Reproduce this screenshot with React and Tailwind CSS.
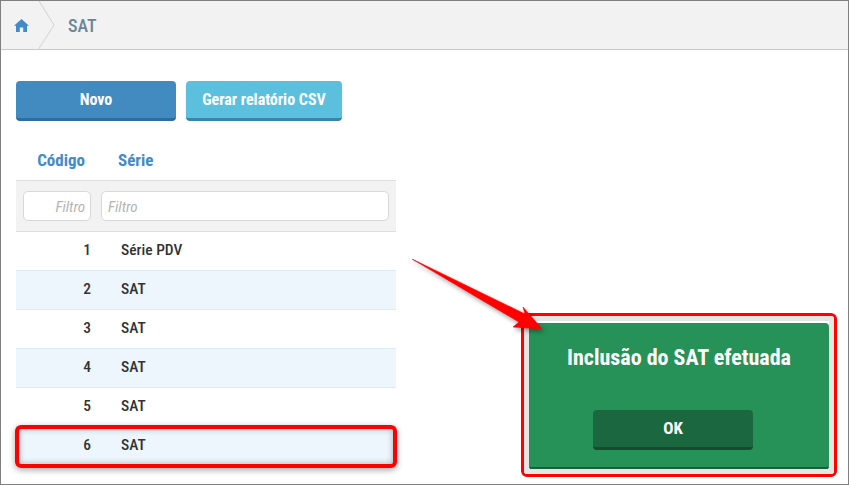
const ROWS = [
  { code: 1, serie: 'Série PDV' },
  { code: 2, serie: 'SAT' },
  { code: 3, serie: 'SAT' },
  { code: 4, serie: 'SAT' },
  { code: 5, serie: 'SAT' },
  { code: 6, serie: 'SAT' },
];

const font = "font-['Roboto_Condensed','Liberation_Sans',sans-serif]";

function HomeIcon() {
  return (
    <svg width="15" height="13" viewBox="0 0 15 13" className="fill-[#428bca]">
      <path d="M7.5 0 L15 6.8 H13 V13 H9.2 V8.4 H5.8 V13 H2 V6.8 H0 Z" />
    </svg>
  );
}

function Breadcrumb() {
  return (
    <div className="relative flex h-[49px] shrink-0 items-center border-b border-[#c8c8c8] bg-[#f2f2f2]">
      <div className="flex w-[67px] shrink-0 pl-[13px]">
        <HomeIcon />
      </div>
      <span className="text-[18px] font-medium text-[#6b8596]">SAT</span>
      <svg width="20" height="49" className="absolute top-0 left-[37px]" fill="none">
        <path d="M1 0 L16 24 L0 49" stroke="#d2d2d2" strokeWidth="1" />
      </svg>
    </div>
  );
}

function Table() {
  return (
    <div className="mt-[20px] w-[380px] text-[15.5px]">
      <div className="flex h-[39px] items-center font-bold text-[#428bca]">
        <div className="w-[69px] text-right text-[17px]">Código</div>
        <div className="ml-[33px] text-[17px]">Série</div>
      </div>
      <div className="flex h-[52px] items-center gap-[10px] border-y border-[#dedede] bg-[#f2f2f2] px-[7px]">
        <div className="flex h-[30px] w-[68px] items-center justify-end rounded-[5px] border border-[#d8d8d8] bg-white pt-[2px] pr-[5px] text-[15px] text-[#b4b4b4] italic">
          Filtro
        </div>
        <div className="flex h-[30px] flex-1 items-center rounded-[5px] border border-[#d8d8d8] bg-white pt-[2px] pl-[6px] text-[15px] text-[#b4b4b4] italic">
          Filtro
        </div>
      </div>
      {ROWS.map((row, i) => (
        <div
          key={row.code}
          className={`flex h-[39px] items-center border-b border-[#dcecf7] font-medium text-[#333333] ${
            i % 2 === 1 ? 'bg-[#edf6fd]' : 'bg-white'
          }`}
        >
          <div className="w-[75px] text-right">{row.code}</div>
          <div className="ml-[30px]">{row.serie}</div>
        </div>
      ))}
    </div>
  );
}

function Dialog() {
  return (
    <div className="absolute top-[322px] left-[528px] h-[147px] w-[300px] rounded-[4px] border-b-[3px] border-[#1e5c3b] bg-[#269257] text-white">
      <div className="mt-[18px] text-center text-[22px] font-bold">Inclusão do SAT efetuada</div>
      <button className="mt-[36px] ml-[64px] flex h-[40px] w-[160px] items-center justify-center rounded-[4px] border-b-[3px] border-[#174a2e] bg-[#1b6840] text-[17px] font-bold">
        OK
      </button>
    </div>
  );
}

export default function App() {
  return (
    <div className={`relative h-[485px] w-[849px] overflow-hidden border border-[#808080] bg-white ${font}`}>
      <Breadcrumb />
      <div className="px-[15px] pt-[31px]">
        <div className="flex gap-[10px] text-[16px] font-bold text-white">
          <button className="h-[40px] w-[160px] rounded-[4px] border-b-[3px] border-[#2f6d9e] bg-[#428bc0]">Novo</button>
          <button className="h-[40px] w-[156px] rounded-[4px] border-b-[3px] border-[#3a86a8] bg-[#5bc0de]">
            Gerar relatório CSV
          </button>
        </div>
        <Table />
      </div>

      <Dialog />

      {/* anotacoes vermelhas por cima do print */}
      <div className="absolute top-[424px] left-[14px] h-[43px] w-[382px] rounded-[6px] border-[4px] border-[#ff0000] shadow-[0_2px_6px_rgba(0,0,0,0.35),inset_0_0_6px_rgba(0,0,0,0.3)]" />
      <div className="absolute top-[312px] left-[520px] h-[164px] w-[316px] rounded-[6px] border-[3px] border-[#ff0000]" />
      <div className="absolute top-[315px] left-[523px] h-[158px] w-[310px] rounded-[3px] border-[5px] border-[#e6e6e6]" />
      <svg width="140" height="80" className="absolute top-[258px] left-[411px] drop-shadow-[2px_3px_2px_rgba(0,0,0,0.35)]">
        <path d="M0 0 L113 55 L111 48 L130 70 L101 68 L107 63 Z" fill="#ff0000" stroke="#ff0000" strokeWidth="0.6" />
      </svg>
    </div>
  );
}
